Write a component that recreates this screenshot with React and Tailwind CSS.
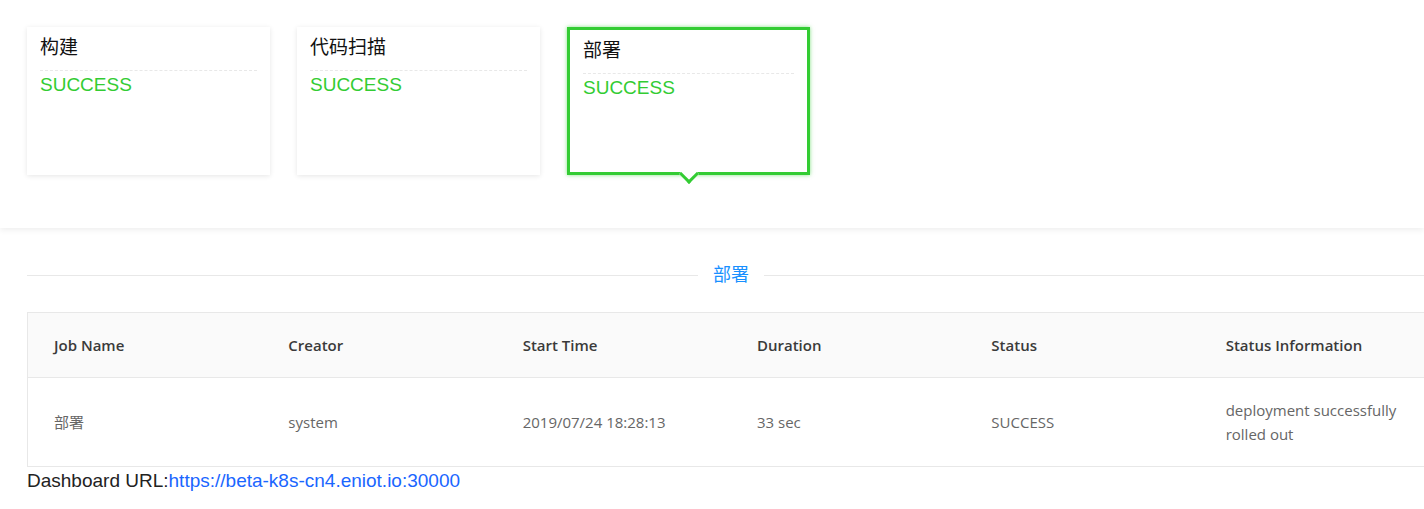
const stages = [
  { name: '构建', status: 'SUCCESS' },
  { name: '代码扫描', status: 'SUCCESS' },
  { name: '部署', status: 'SUCCESS', active: true },
]

const columns = ['Job Name', 'Creator', 'Start Time', 'Duration', 'Status', 'Status Information']

const rows = [
  ['部署', 'system', '2019/07/24 18:28:13', '33 sec', 'SUCCESS', 'deployment successfully rolled out'],
]

const cjk = "font-['Liberation_Sans','Noto_Sans_CJK_SC',sans-serif]"
const tableFont = "font-['Open_Sans','Noto_Sans_CJK_SC',sans-serif]"

function StageCard({ name, status, active }) {
  return (
    <div
      className={`relative w-[243px] h-[148px] bg-white ${
        active
          ? 'border-[3px] border-[#33cc33] shadow-[0_0_4px_rgba(51,204,51,0.6)]'
          : 'shadow-[0_1px_5px_rgba(0,0,0,0.1)]'
      }`}
    >
      <div className="px-[13px] pt-[9px]">
        <div className={`${cjk} text-[19px] leading-[24px] text-[#111] pb-[10px] border-b border-dashed border-[#e8e8e8]`}>
          {name}
        </div>
        <div className="font-['Liberation_Sans',sans-serif] text-[19px] leading-[24px] mt-[2px] text-[#33cc33]">
          {status}
        </div>
      </div>
      {active && (
        <span className="absolute left-1/2 -bottom-[9px] w-[14px] h-[14px] -translate-x-1/2 rotate-45 bg-white border-r-[3px] border-b-[3px] border-[#33cc33]" />
      )}
    </div>
  )
}

export default function App() {
  return (
    <div className="w-[1424px] h-[509px] overflow-hidden bg-white">
      {/* Pipeline stages */}
      <div className="h-[228px] px-[27px] pt-[27px] flex gap-[27px] bg-white shadow-[0_2px_6px_rgba(0,0,0,0.07)] relative z-10">
        {stages.map(s => (
          <StageCard key={s.name} {...s} />
        ))}
      </div>

      {/* Details */}
      <div className="pl-[27px] w-[1435px]">
        <div className="mt-[35px] h-[24px] flex items-center">
          <div className="flex-1 h-px bg-[#e8e8e8]" />
          <span className={`${cjk} px-[15px] text-[18px] leading-[24px] text-[#1890ff]`}>部署</span>
          <div className="flex-1 h-px bg-[#e8e8e8]" />
        </div>

        <div className={`mt-[25px] w-[1408px] border border-[#e8e8e8] ${tableFont} text-[15px]`}>
          <div className="grid grid-cols-6 bg-[#fafafa] border-b border-[#e8e8e8]">
            {columns.map(c => (
              <div key={c} className="pl-[26px] pr-[12px] py-[20px] leading-[24px] font-semibold text-[#3a3a3a]">
                {c}
              </div>
            ))}
          </div>
          {rows.map((r, i) => (
            <div key={i} className="grid grid-cols-6 items-center">
              {r.map((cell, j) => (
                <div key={j} className="pl-[26px] pr-[12px] py-[20px] leading-[24px] text-[#666]">
                  {cell}
                </div>
              ))}
            </div>
          ))}
        </div>

        <div className="font-['Liberation_Sans',sans-serif] text-[19px] leading-[27px] text-[#222]">
          Dashboard URL:<a href="#" className="text-[#1a66ff]">https://beta-k8s-cn4.eniot.io:30000</a>
        </div>
      </div>
    </div>
  )
}
